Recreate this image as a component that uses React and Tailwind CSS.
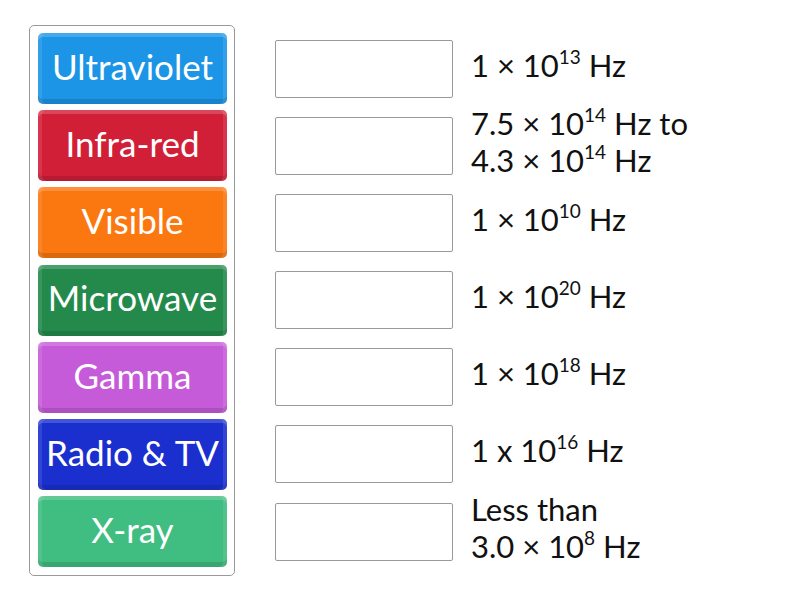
const tiles = [
  { label: "Ultraviolet", bg: "bg-[#1c95e6]" },
  { label: "Infra-red", bg: "bg-[#d21f38]" },
  { label: "Visible", bg: "bg-[#fb7710]" },
  { label: "Microwave", bg: "bg-[#238a4c]" },
  { label: "Gamma", bg: "bg-[#c65bd9]" },
  { label: "Radio & TV", bg: "bg-[#1b2fce]" },
  { label: "X-ray", bg: "bg-[#40bd80]" },
];

const answers = [
  [<>1 × 10<sup>13</sup> Hz</>],
  [<>7.5 × 10<sup>14</sup> Hz to</>, <>4.3 × 10<sup>14</sup> Hz</>],
  [<>1 × 10<sup>10</sup> Hz</>],
  [<>1 × 10<sup>20</sup> Hz</>],
  [<>1 × 10<sup>18</sup> Hz</>],
  [<>1 x 10<sup>16</sup> Hz</>],
  [<>Less than</>, <>3.0 × 10<sup>8</sup> Hz</>],
];

function Tile({ label, bg }) {
  return (
    <div
      className={`${bg} h-[71px] w-[189px] rounded-[5px] flex items-center justify-center pb-[5px] text-white text-[35px] whitespace-nowrap shadow-[inset_0_4px_0_rgba(255,255,255,0.18),inset_4px_0_0_rgba(255,255,255,0.1),inset_-4px_0_0_rgba(255,255,255,0.1),inset_0_-5px_0_rgba(0,0,0,0.12)]`}
    >
      {label}
    </div>
  );
}

export default function App() {
  return (
    <div className="w-[800px] h-[600px] bg-white relative font-['Lato',sans-serif] text-[#111]">
      <div className="flex pt-[25px] pl-[29px]">
        {/* tiles */}
        <div className="w-[206px] border border-[#9a9a9a] rounded-[5px] pt-[7px] pb-[8px] pl-[8px] flex flex-col gap-[6.2px]">
          {tiles.map((t) => (
            <Tile key={t.label} {...t} />
          ))}
        </div>
        {/* answer rows */}
        <div className="pt-[8px] pl-[40px] flex flex-col gap-[6.2px]">
          {answers.map((lines, i) => (
            <div key={i} className="h-[71px] flex items-center">
              <div className="w-[178px] h-[58px] border border-[#999] rounded-[2px] bg-white" />
              <div className="ml-[18px] pb-[7px] text-[31px] leading-[37px] whitespace-nowrap [&_sup]:text-[19px] [&_sup]:top-[-13px]">
                {lines.map((l, j) => (
                  <div key={j}>{l}</div>
                ))}
              </div>
            </div>
          ))}
        </div>
      </div>
    </div>
  );
}
